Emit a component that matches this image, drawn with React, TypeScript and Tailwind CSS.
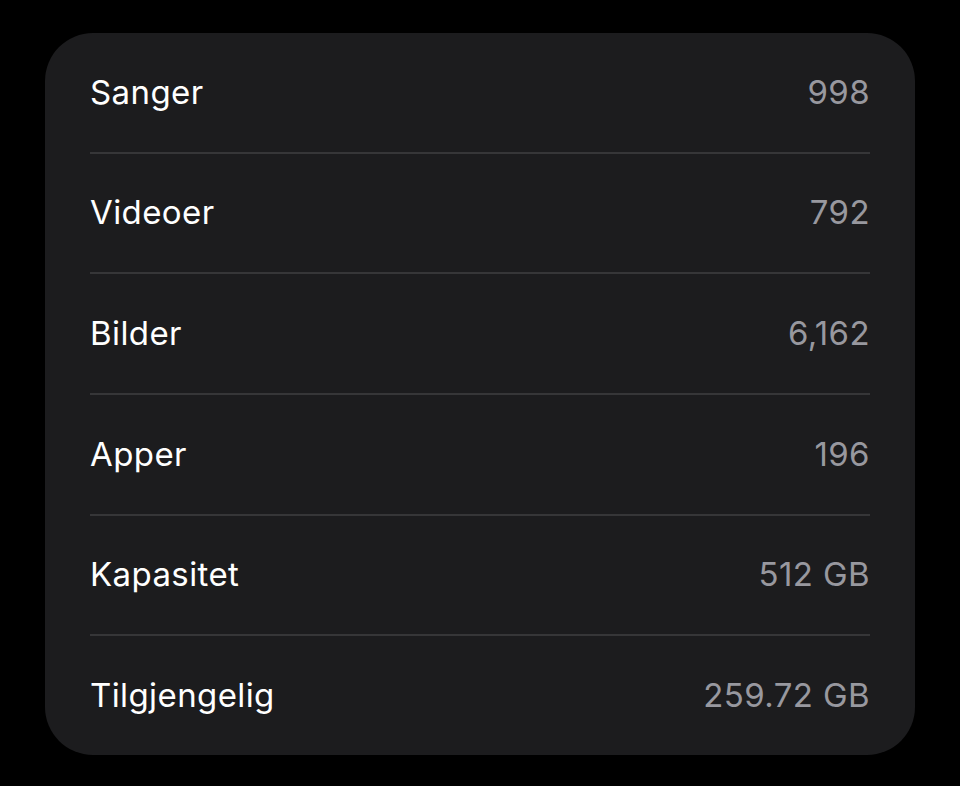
const rows: [string, string][] = [
  ["Sanger", "998"],
  ["Videoer", "792"],
  ["Bilder", "6,162"],
  ["Apper", "196"],
  ["Kapasitet", "512 GB"],
  ["Tilgjengelig", "259.72 GB"],
];

export default function App() {
  return (
    <div className="w-[960px] h-[786px] bg-black pt-[33px] pl-[45px] font-['Inter',sans-serif]">
      <div className="w-[870px] h-[722px] rounded-[48px] bg-[#1c1c1e] px-[45px] flex flex-col">
        {rows.map(([label, value], i) => (
          <div
            key={label}
            className={
              "flex-1 flex items-center justify-between " +
              (i < rows.length - 1 ? "border-b-2 border-[#363638]" : "")
            }
          >
            <span className="text-[33px] text-white tracking-[0.4px]">{label}</span>
            <span className="text-[33px] text-[#98989f] tracking-[0.4px]">{value}</span>
          </div>
        ))}
      </div>
    </div>
  );
}
